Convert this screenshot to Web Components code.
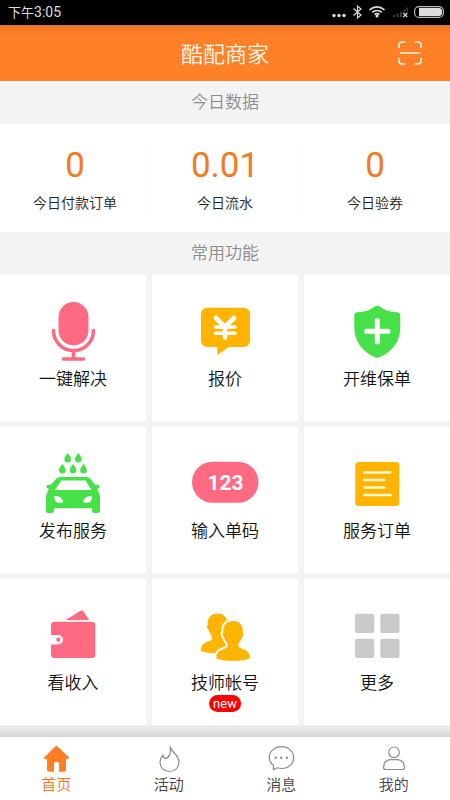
<!DOCTYPE html>
<html lang="zh-CN">
<head>
<meta charset="utf-8">
<meta name="viewport" content="width=device-width, initial-scale=1">
<title>酷配商家</title>
<style>
  body { margin: 0; background: #f3f3f3; font-family: Roboto, "Noto Sans CJK SC", sans-serif; color: #222; }
</style>
</head>
<body>
<merchant-app></merchant-app>
<script>
const define = (name, html, setup) => {
  const template = document.createElement('template');
  template.innerHTML = html;
  customElements.define(name, class extends HTMLElement {
    connectedCallback() {
      if (this.shadowRoot) return;
      this.attachShadow({ mode: 'open' }).append(template.content.cloneNode(true));
      if (setup) setup(this, this.shadowRoot);
    }
  });
};

const drop = (x, y) => `<path d="M${x} ${y}c1.400 2.200 3.300 4 3.300 6.200a3.300 3.300 0 0 1-6.600 0c0-2.200 1.900-4 3.300-6.200z"/>`;
const person = 'M44 21c6.500 0 10.300 4.200 9.800 11.500 1.300.5.800 3.900-.8 5-.6 2.800-2.600 4.500-3.500 6.200-.5 2.300.3 4 2.500 4.900 4.500 1.800 8.700 3.200 8.700 7.700V58.500c-3.500 1.700-9 2.300-16.700 2.300s-13.200-.6-16.500-2.300V56.300c0-4.500 4.200-5.900 8.600-7.700 2.200-.9 3-2.600 2.500-4.900-.9-1.700-2.900-3.400-3.500-6.200-1.600-1.100-2.100-4.500-.8-5C33.700 25.200 37.500 21 44 21z';

const icons = {
  mic: `<g fill="#ff6a83"><rect x="21.500" y="6" width="30" height="43.500" rx="15"/><g fill="none" stroke="#ff6a83" stroke-width="3.500" stroke-linecap="round"><path d="M16.500 34.500a20 20 0 0 0 40 0M36.500 54.500V63M26.500 63h20"/></g></g>`,
  quote: `<path fill="#ffb400" d="M18 11.700h37a6 6 0 0 1 6 6V45a6 6 0 0 1-6 6H40L28.300 59V51H18a6 6 0 0 1-6-6V17.700a6 6 0 0 1 6-6z"/><g fill="none" stroke="#fff" stroke-linecap="round" stroke-linejoin="round"><path stroke-width="4.600" d="M27 22l9 9 9-9M36 31v10.500"/><path stroke-width="3.500" d="M26.500 31h19.500M26.500 37.200h19.500"/></g>`,
  shield: `<path fill="#46e048" d="M33.800 10.600q2.500-1.600 5 0C44 14.500 48.500 16 56 16.300q3.200.2 3.300 3.400V31c0 14-7.500 24.500-20.500 30.200q-2.500 1-5 0C20.800 55.500 13.300 45 13.300 31V19.700q.1-3.200 3.300-3.400c7.500-.3 12-1.800 17.200-5.700z"/><path stroke="#fff" stroke-width="5" stroke-linecap="round" d="M36.300 24.500v21.500M25.500 35.300H47"/>`,
  car: `<g fill="#46e048">${drop(30.7, 5)}${drop(41.3, 5)}${drop(25.3, 16)}${drop(36, 16)}${drop(46.5, 16)}<path fill-rule="evenodd" d="M23.500 29h26q2.200 0 3.500 1.600L58.500 37q3.500-.6 4 .8.500 2-1.500 2.800l-.8.900c2 3 2.800 5.500 2.800 9V62.500q0 2.500-2.500 2.500h-3q-2.500 0-2.500-2.500V60.300H17V62.500q0 2.500-2.500 2.500h-3Q9 65 9 62.500V50.500c0-3.500.8-6 2.800-9l-.8-.9q-2-.8-1.500-2.800.5-1.400 4-.8l6-6.400Q21.300 29 23.500 29zM24.300 32.500L18 42H54.500L48.500 32.500zM17.300 48c3.500-.3 7.700 1 8.700 5 .2 1.200-.6 1.900-2 1.900-4 0-7-1.200-6.700-6.900zM55 48c-3.500-.3-7.700 1-8.700 5-.2 1.200.6 1.900 2 1.900 4 0 7-1.200 6.700-6.900z"/></g>`,
  code: `<rect x="3" y="13.700" width="66.500" height="41" rx="20.500" fill="#ff6a83"/><text x="36.500" y="42" text-anchor="middle" fill="#fff" font-family="Roboto, sans-serif" font-weight="700" font-size="21">123</text>`,
  orders: `<rect x="14.300" y="14" width="44" height="44" rx="3.500" fill="#ffb400"/><path fill="none" stroke="#fff8d8" stroke-width="2.500" stroke-linecap="round" d="M23.300 24.400h26.500M23.300 32h20M23.300 39.400h20M23.300 47h26.500"/>`,
  wallet: `<g fill="#ff6a83"><path d="M28.500 20L43.500 10.800q2-1 3.200.8L52 20z"/><path d="M17.500 21.700h37.300q3.500 0 3.500 3.500V54.500q0 3.500-3.500 3.500H17.500Q14 58 14 54.500V44.400h7.300a4.700 4.700 0 0 0 0-9.400H14V25.200q0-3.500 3.500-3.500z"/><circle cx="21.300" cy="39.700" r="2.100"/></g>`,
  people: `<g fill="#ffb400"><path transform="translate(-15.500 -7.500)" d="${person}"/><path d="${person}" stroke="#fff" stroke-width="4" paint-order="stroke"/></g>`,
  more: `<g fill="#cacaca"><rect x="14" y="13.700" width="19.300" height="19.300" rx="2"/><rect x="39.300" y="13.700" width="19.300" height="19.300" rx="2"/><rect x="14" y="38.800" width="19.300" height="19.300" rx="2"/><rect x="39.300" y="38.800" width="19.300" height="19.300" rx="2"/></g>`,
  home: `<path fill="#ff7f27" d="M13 1.700q1.500-1.200 3 0L26.500 12q1.200 1.500-.5 2.200H24V25q0 1.700-1.700 1.700H17V18.500q0-1.500-1.500-1.500h-2Q12 17 12 18.500v8.200H6.700Q5 26.700 5 25V14.200H3Q1.300 13.500 2.500 12z"/>`,
  flame: `<path fill="none" stroke="#8c8c8c" stroke-width="1.200" stroke-linejoin="round" d="M15 1.500c1.300 5.500 9 8.500 9 15.500 0 5.500-4 9.500-9.500 9.500S5 22.500 5 17.200c0-3 1.300-5.200 3-7.200.1 2 1.400 3.600 3.200 3.300C15 12.500 16 6.500 15 1.500z"/>`,
  message: `<g fill="none" stroke="#8c8c8c" stroke-width="1.200" stroke-linejoin="round"><path d="M6.500 20.200C3.800 18.300 2.200 15.500 2.200 12.700 2.200 6.600 7.500 1.700 14.500 1.700s12.200 4.900 12.200 11-5.200 10.800-12.200 10.800c-1.700 0-3-.2-4.300-.7L6.300 24.800z"/></g><g fill="#8c8c8c"><circle cx="8.700" cy="12.700" r="1.200"/><circle cx="14.300" cy="12.700" r="1.200"/><circle cx="20" cy="12.700" r="1.200"/></g>`,
  profile: `<g fill="none" stroke="#8c8c8c" stroke-width="1.200"><circle cx="14" cy="7.300" r="5.300"/><path d="M11 14.600h6c4.500 0 7.500 3.300 7.500 7.600q0 2.300-2.300 2.300H5.800q-2.300 0-2.300-2.300c0-4.300 3-7.600 7.500-7.600z"/></g>`
};

define('app-icon', `<style>:host{display:block} svg{display:block;width:100%;height:100%}</style>`, (host, root) => {
  const size = host.getAttribute('size') || 72;
  root.innerHTML += `<svg viewBox="0 0 ${size} ${size}" aria-hidden="true">${icons[host.getAttribute('name')]}</svg>`;
});

define('status-bar', `<style>
  :host{display:flex;align-items:center;justify-content:space-between;height:25px;padding:0 6px 0 8px;background:#000;color:#ddd;font-size:13px;line-height:27px}
  time{display:flex}
  .digits{font-size:14px}
  svg{display:block}
</style>
<time>下午<span class="digits">3:05</span></time>
<svg width="114" height="17" viewBox="330 5 114 17" role="img" aria-label="状态">
  <g fill="#ddd"><circle cx="334" cy="16.500" r="1.700"/><circle cx="339" cy="16.500" r="1.700"/><circle cx="344" cy="16.500" r="1.700"/></g>
  <path fill="none" stroke="#ddd" stroke-width="1.200" d="M353.500 9.500l7.500 6.500-3.500 3V7l3.500 3-7.500 6.500"/>
  <g fill="none" stroke="#ddd" stroke-width="1.700"><path d="M369.500 10.800q7.500-6 15 0M372.200 13.300q4.800-3.600 9.600 0M374.600 15.500q2.400-1.600 4.800 0"/></g><circle cx="377" cy="17" r="1.500" fill="#ddd"/>
  <g fill="#3a3a3a"><rect x="393" y="16" width="2" height="2"/><rect x="396.500" y="14.500" width="2" height="3.500"/><rect x="400" y="12.500" width="2" height="5.500"/><rect x="403.500" y="10.500" width="2" height="3"/><rect x="406.500" y="8.500" width="1.500" height="4"/></g>
  <path stroke="#ddd" stroke-width="1.200" d="M403.300 14l4 4m0-4l-4 4"/>
  <rect x="414.600" y="7.600" width="28.800" height="10.800" rx="4.500" fill="none" stroke="#bbb" stroke-width="1.200"/><path fill="#ddd" d="M419 9h20q3 0 3 3v2q0 3-3 3H419z"/>
</svg>`);

define('app-header', `<style>
  :host{display:grid;grid-template-columns:1fr auto 1fr;align-items:center;height:56px;padding:0 26px;background:linear-gradient(#e67424,#fb7e28 8px,#ff8127 14px);color:#fff7ec}
  h1{grid-column:2;margin:0;padding-top:3px;font-size:22px;line-height:32px;font-weight:350}
  button{justify-self:end;padding:0;border:0;background:none;color:inherit}
  svg{display:block}
</style>
<h1><slot></slot></h1>
<button type="button" aria-label="扫一扫"><svg width="28" height="28" viewBox="0 0 28 28" fill="none" stroke="currentColor" stroke-width="1.600" stroke-linecap="round"><path d="M3 8.500V6q0-3 3-3h2.500M19.500 3H22q3 0 3 3v2.500M25 19.500V22q0 3-3 3h-2.500M8.500 25H6q-3 0-3-3v-2.500M4.500 14h19"/></svg></button>`);

define('section-title', `<style>
  :host{display:block;background:#f3f3f3}
  h2{margin:0;text-align:center;color:#8c8c8c;font-weight:350;font-size:17px;line-height:43px}
</style><h2><slot></slot></h2>`);

define('stat-row', `<style>
  :host{display:grid;grid-template-columns:repeat(3,1fr);padding:20px 0;background:#fff}
</style><slot></slot>`);

define('stat-item', `<style>
  :host{display:flex;flex-direction:column;align-items:center;height:68px;box-shadow:1px 0 #fafafa}
  :host(:last-child){box-shadow:none}
  .value{color:#f27a23;font-size:35px;line-height:44px}
  .label{color:#222;font-size:14px;font-weight:350;line-height:30px}
</style><span class="value"><slot name="value"></slot></span><span class="label"><slot></slot></span>`);

define('tile-grid', `<style>
  :host{display:grid;grid-template-columns:repeat(3,1fr);gap:6px}
</style><slot></slot>`);

define('feature-tile', `<style>
  :host{display:block;aspect-ratio:1;background:#fff}
  button{position:relative;box-sizing:border-box;display:flex;flex-direction:column;align-items:center;width:100%;height:100%;padding:21px 0 0;border:0;background:none;color:#111;font:inherit;font-size:17px;font-weight:350;line-height:22px}
  app-icon{width:72px;height:72px}
  .badge{position:absolute;top:116px;left:50%;transform:translateX(-50%);padding:0 4px;border-radius:9px;background:#f00;color:#fff;font-size:13px;font-weight:400;line-height:17px}
  .badge[hidden]{display:none}
</style><button type="button"><app-icon></app-icon><span><slot></slot></span><span class="badge" hidden></span></button>`, (host, root) => {
  const icon = document.createElement('app-icon');
  icon.setAttribute('name', host.getAttribute('icon'));
  root.querySelector('app-icon').replaceWith(icon);
  if (host.hasAttribute('badge')) {
    const badge = root.querySelector('.badge');
    badge.textContent = host.getAttribute('badge');
    badge.hidden = false;
  }
});

define('tab-bar', `<style>
  :host{display:block;position:sticky;bottom:0;margin-top:auto}
  .shade{height:12px;background:linear-gradient(#eee,#d6d6d6)}
  nav{display:grid;grid-template-columns:repeat(4,1fr);height:63px;background:#fff}
</style><div class="shade"></div><nav aria-label="主导航"><slot></slot></nav>`);

define('tab-item', `<style>
  :host{display:block}
  a{display:flex;flex-direction:column;align-items:center;gap:2px;padding-top:8px;color:#444;text-decoration:none;font-size:15px;font-weight:350;line-height:20px}
  :host([current]) a{color:#ff7417}
  .icon{width:28px;height:28px}
</style><a href="#"><span class="icon"></span><slot></slot></a>`, (host, root) => {
  const icon = document.createElement('app-icon');
  icon.setAttribute('size', 28);
  icon.setAttribute('name', host.getAttribute('icon'));
  root.querySelector('.icon').append(icon);
  if (host.hasAttribute('current')) root.querySelector('a').setAttribute('aria-current', 'page');
});

define('merchant-app', `<style>
  :host{display:flex;flex-direction:column;min-height:100vh}
</style>
<status-bar></status-bar>
<app-header>酷配商家</app-header>
<section-title>今日数据</section-title>
<stat-row>
  <stat-item><span slot="value">0</span>今日付款订单</stat-item>
  <stat-item><span slot="value">0.01</span>今日流水</stat-item>
  <stat-item><span slot="value">0</span>今日验券</stat-item>
</stat-row>
<section-title>常用功能</section-title>
<tile-grid>
  <feature-tile icon="mic">一键解决</feature-tile>
  <feature-tile icon="quote">报价</feature-tile>
  <feature-tile icon="shield">开维保单</feature-tile>
  <feature-tile icon="car">发布服务</feature-tile>
  <feature-tile icon="code">输入单码</feature-tile>
  <feature-tile icon="orders">服务订单</feature-tile>
  <feature-tile icon="wallet">看收入</feature-tile>
  <feature-tile icon="people" badge="new">技师帐号</feature-tile>
  <feature-tile icon="more">更多</feature-tile>
</tile-grid>
<tab-bar>
  <tab-item icon="home" current>首页</tab-item>
  <tab-item icon="flame">活动</tab-item>
  <tab-item icon="message">消息</tab-item>
  <tab-item icon="profile">我的</tab-item>
</tab-bar>`);
</script>
</body>
</html>
